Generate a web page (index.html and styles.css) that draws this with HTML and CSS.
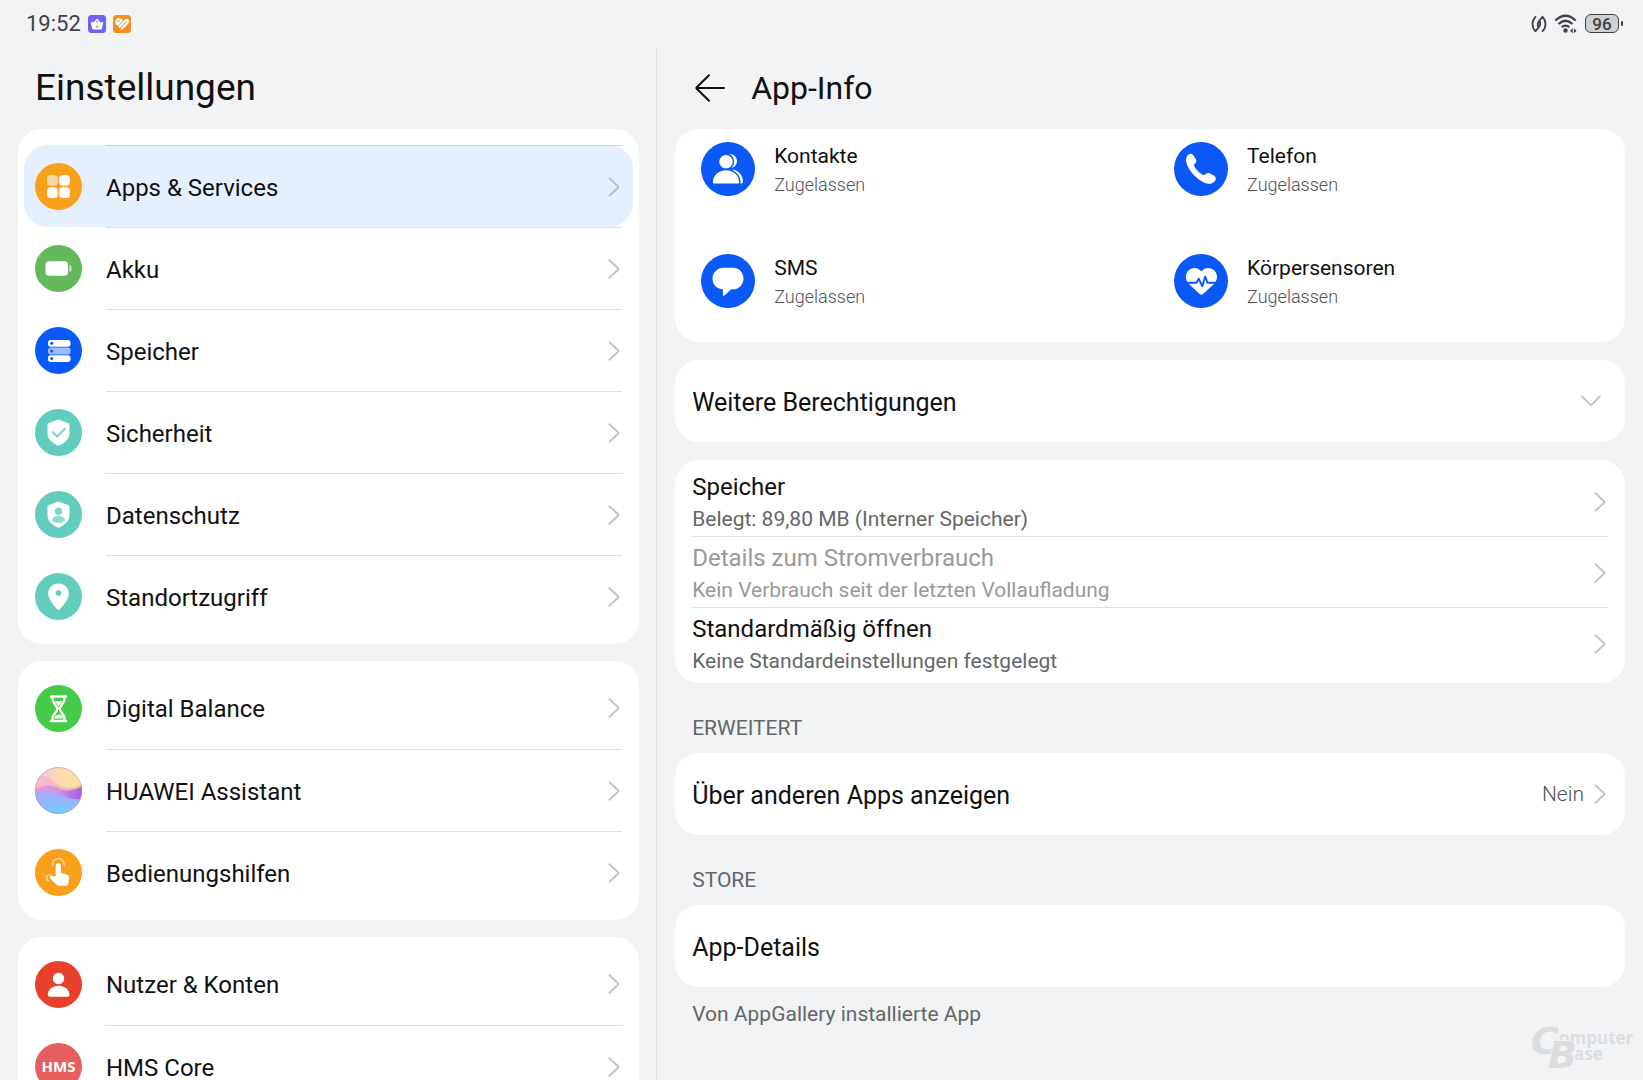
FILE: index.html
```html
<!DOCTYPE html>
<html lang="de">
<head>
<meta charset="utf-8">
<meta name="viewport" content="width=device-width, initial-scale=1">
<title>Einstellungen</title>
<link rel="stylesheet" href="styles.css">
</head>
<body>
<svg class="defs" aria-hidden="true">
  <symbol id="chevron" viewBox="0 0 12 20"><path d="M1.500 1.200 10 9.200q.9.8 0 1.600L1.500 18.800" fill="none" stroke="currentColor" stroke-width="2" stroke-linecap="round" stroke-linejoin="round"/></symbol>
  <symbol id="chevron-down" viewBox="0 0 20 12"><path d="M1.200 1.500 9.200 9.600q.8.800 1.600 0L18.800 1.500" fill="none" stroke="currentColor" stroke-width="2" stroke-linecap="round" stroke-linejoin="round"/></symbol>
</svg>

<header class="status">
  <div class="status-side">
    <time class="clock">19:52</time>
    <svg class="notice" viewBox="0 0 18 18" aria-hidden="true"><rect width="18" height="18" rx="3.500" fill="#6c63ee"/><path d="M3 7.200h2.500L9 3.600l3.500 3.600H15q.4.200.2.800l-1.400 5.700q-.2.800-1 .8H5.200q-.8 0-1-.8L2.800 8q-.2-.6.2-.8z" fill="#fff"/><path d="M7.500 7.200 9 5.600l1.500 1.600z" fill="#8d86f2"/><path d="M7.200 12.700 9 9.400l1.800 3.300z" fill="#f2a35e"/></svg>
    <svg class="notice" viewBox="0 0 18 18" aria-hidden="true"><rect width="18" height="18" rx="3.500" fill="#f78d1e"/><path d="M3.700 8.500C2.500 6 4 4 6 4.200q1.500 0 2.500 1.300L4.700 9.300M6.500 11.500l6-6q1.300-1.200 2.200-.2t-.2 2.500L8.800 13.700" fill="none" stroke="#fff" stroke-width="2.300" stroke-linecap="round" stroke-linejoin="round"/></svg>
  </div>
  <div class="status-side">
    <svg class="nfc" viewBox="0 0 16 18" aria-hidden="true"><path d="M4.500 1.800Q1.500 4.600 1.500 9t3 7.200M11.500 1.800q3 2.800 3 7.200t-3 7.200M4.500 16.200 8 12q2-2.500.8-6M11.500 1.800 8 6q-2 2.500-.8 6" fill="none" stroke="#3f4144" stroke-width="1.800" stroke-linecap="round"/></svg>
    <svg class="wifi" viewBox="0 0 24 20" aria-hidden="true"><path d="M1.300 6.500Q11.500-3 21.700 6.500M4.500 10Q11.500 3.500 18.500 10M7.700 13.200q3.800-3.200 7.600 0" fill="none" stroke="#3f4144" stroke-width="2.300"/><circle cx="11.500" cy="16.500" r="2.200" fill="#3f4144"/><path d="m18.700 14.200-2.700 2.500 2.700 2.500zm1.200 0 2.700 2.500-2.700 2.500z" fill="#3f4144"/></svg>
    <span class="battery">96</span>
  </div>
</header>

<div class="panes">
  <nav class="menu" aria-label="Einstellungen">
    <h1 class="menu-title">Einstellungen</h1>

    <ul class="card menu-card menu-card-cut">
      <li><a class="menu-row is-active" href="#apps" aria-current="page">
        <svg class="menu-icon" viewBox="0 0 47 47"><circle cx="23.500" cy="23.500" r="23.500" fill="#f8a01c"/><rect x="12" y="12" width="10.700" height="10.700" rx="3.500" fill="#fcd9a4"/><g fill="#fff"><rect x="24.200" y="12" width="10.700" height="10.700" rx="3.500"/><rect x="12" y="24.200" width="10.700" height="10.700" rx="3.500"/><rect x="24.200" y="24.200" width="10.700" height="10.700" rx="3.500"/></g></svg>
        <span class="menu-body"><span class="label">Apps &amp; Services</span><svg class="chevron"><use href="#chevron"/></svg></span></a></li>
      <li><a class="menu-row" href="#akku">
        <svg class="menu-icon" viewBox="0 0 47 47"><circle cx="23.500" cy="23.500" r="23.500" fill="#65b95c"/><rect x="10.500" y="16.300" width="22.500" height="14.500" rx="3.500" fill="#fff"/><path d="M34.200 20.500h1.300q1 0 1 1v4q0 1-1 1h-1.300z" fill="#c8e6c4"/></svg>
        <span class="menu-body"><span class="label">Akku</span><svg class="chevron"><use href="#chevron"/></svg></span></a></li>
      <li><a class="menu-row" href="#speicher">
        <svg class="menu-icon" viewBox="0 0 47 47"><circle cx="23.500" cy="23.500" r="23.500" fill="#0a59f7"/><rect x="13" y="13" width="22.500" height="6.700" rx="2.700" fill="#fff"/><rect x="13" y="20.500" width="22.500" height="7" rx="2.700" fill="#9dbdfc"/><rect x="13" y="28.200" width="22.500" height="6.700" rx="2.700" fill="#fff"/><g fill="#0a59f7"><circle cx="16.700" cy="16.300" r="1.500"/><circle cx="16.700" cy="24" r="1.500"/><circle cx="16.700" cy="31.500" r="1.500"/></g></svg>
        <span class="menu-body"><span class="label">Speicher</span><svg class="chevron"><use href="#chevron"/></svg></span></a></li>
      <li><a class="menu-row" href="#sicherheit">
        <svg class="menu-icon" viewBox="0 0 47 47"><circle cx="23.500" cy="23.500" r="23.500" fill="#62cdbc"/><path d="M23.500 10.500 33 14q1.500.6 1.500 2v8c0 6-4.500 10-11 12.800C17 34 12.500 30 12.500 24v-8q0-1.400 1.500-2z" fill="#fff"/><path d="m17.500 23 4.700 4.500 7.800-8" fill="none" stroke="#7ed6c8" stroke-width="2" stroke-linecap="round" stroke-linejoin="round"/></svg>
        <span class="menu-body"><span class="label">Sicherheit</span><svg class="chevron"><use href="#chevron"/></svg></span></a></li>
      <li><a class="menu-row" href="#datenschutz">
        <svg class="menu-icon" viewBox="0 0 47 47"><circle cx="23.500" cy="23.500" r="23.500" fill="#62cdbc"/><path d="M23.500 10.500 33 14q1.500.6 1.500 2v8c0 6-4.500 10-11 12.800C17 34 12.500 30 12.500 24v-8q0-1.400 1.500-2z" fill="#fff"/><circle cx="23.500" cy="20.300" r="3.700" fill="#7ed6c8"/><ellipse cx="23.500" cy="28.500" rx="6.500" ry="3.600" fill="#8fdccf"/></svg>
        <span class="menu-body"><span class="label">Datenschutz</span><svg class="chevron"><use href="#chevron"/></svg></span></a></li>
      <li><a class="menu-row" href="#standort">
        <svg class="menu-icon" viewBox="0 0 47 47"><circle cx="23.500" cy="23.500" r="23.500" fill="#62cdbc"/><path d="M23.500 10.500c6 0 10.300 4.500 10.300 10 0 6-5.300 11.700-9 15.700q-1.300 1.200-2.600 0c-3.700-4-9-9.700-9-15.700 0-5.500 4.300-10 10.300-10z" fill="#fff"/><circle cx="23.500" cy="20" r="2.800" fill="#62cdbc"/></svg>
        <span class="menu-body"><span class="label">Standortzugriff</span><svg class="chevron"><use href="#chevron"/></svg></span></a></li>
    </ul>

    <ul class="card menu-card">
      <li><a class="menu-row" href="#balance">
        <svg class="menu-icon" viewBox="0 0 47 47"><circle cx="23.500" cy="23.500" r="23.500" fill="#44cb49"/><path d="M16 11.500h15M16 36h15M17.500 11.500v2.500c0 4 4.800 6.500 4.800 9.700s-4.800 5.500-4.800 9.500V36M29.500 11.500v2.500c0 4-4.800 6.500-4.800 9.700s4.800 5.500 4.800 9.500V36" fill="none" stroke="#fff" stroke-width="2.400" stroke-linecap="round"/><path d="M20 15.500q3.500 1.500 7 0-.8 3-3.500 5.500-2.700-2.500-3.500-5.500zM19.300 33.500q.7-3.500 4.200-4t4.200 4z" fill="#fff"/></svg>
        <span class="menu-body"><span class="label">Digital Balance</span><svg class="chevron"><use href="#chevron"/></svg></span></a></li>
      <li><a class="menu-row" href="#assistant">
        <svg class="menu-icon" viewBox="0 0 47 47"><defs><clipPath id="orb"><circle cx="23.500" cy="23.500" r="23.500"/></clipPath><linearGradient id="sky"><stop offset="0" stop-color="#f6c4dc"/><stop offset=".5" stop-color="#fad9b4"/><stop offset="1" stop-color="#fbe29a"/></linearGradient><linearGradient id="dune"><stop offset="0" stop-color="#f7bcd6"/><stop offset=".6" stop-color="#f7b4b8"/><stop offset="1" stop-color="#f8b08c"/></linearGradient><linearGradient id="band"><stop offset="0" stop-color="#e89ad4"/><stop offset=".5" stop-color="#cf93ec"/><stop offset="1" stop-color="#a558e4"/></linearGradient><linearGradient id="sea" x2="0" y2="1"><stop offset="0" stop-color="#a9a8fb"/><stop offset="1" stop-color="#72ccff"/></linearGradient></defs><g clip-path="url(#orb)"><path d="M0 0h47v47H0z" fill="url(#sky)"/><path d="M0 9q12-2 18 5t15 7 14-4v20H0z" fill="url(#dune)"/><path d="M0 22q12-6 20-2t14 3.500T47 20v20H0z" fill="url(#band)"/><path d="M0 25q12-2 20 1t14 5 13 1v15H0z" fill="url(#sea)"/></g><circle cx="23.500" cy="23.500" r="23" fill="none" stroke="#a795b8" stroke-opacity=".5"/></svg>
        <span class="menu-body"><span class="label">HUAWEI Assistant</span><svg class="chevron"><use href="#chevron"/></svg></span></a></li>
      <li><a class="menu-row" href="#bedienungshilfen">
        <svg class="menu-icon" viewBox="0 0 47 47"><circle cx="23.500" cy="23.500" r="23.500" fill="#f8a01c"/><path d="M20.700 17q0-2.700 2.600-2.700t2.600 2.700v7l6 1.500q2.400.8 2.200 3l-.8 6q-.3 2.200-2.500 2.200h-6.500q-1.800 0-3-1.200l-6-6q-1.300-1.500-.2-2.400 1.500-1 5.600.5z" fill="#fff"/><path d="M17.600 16.500a5.800 5.800 0 1 1 11.400 0M15 25.500q-3.500 1-3.500 3 0 2 2 3.500" fill="none" stroke="#fcd9a4" stroke-width="1.300" stroke-linecap="round"/></svg>
        <span class="menu-body"><span class="label">Bedienungshilfen</span><svg class="chevron"><use href="#chevron"/></svg></span></a></li>
    </ul>

    <ul class="card menu-card">
      <li><a class="menu-row" href="#konten">
        <svg class="menu-icon" viewBox="0 0 47 47"><circle cx="23.500" cy="23.500" r="23.500" fill="#e8402a"/><circle cx="23.500" cy="17.500" r="5.700" fill="#fff"/><path d="M14.500 35.800q-1.700 0-1.700-1.700c0-5.500 4.700-9.300 10.700-9.300s11 3.800 11 9.300q0 1.700-1.700 1.700z" fill="#fff"/></svg>
        <span class="menu-body"><span class="label">Nutzer &amp; Konten</span><svg class="chevron"><use href="#chevron"/></svg></span></a></li>
      <li><a class="menu-row" href="#hms">
        <svg class="menu-icon" viewBox="0 0 47 47"><circle cx="23.500" cy="23.500" r="23.500" fill="#e55f5f"/><text class="hms" x="23.500" y="29" text-anchor="middle">HMS</text></svg>
        <span class="menu-body"><span class="label">HMS Core</span><svg class="chevron"><use href="#chevron"/></svg></span></a></li>
    </ul>
  </nav>

  <main class="detail">
    <div class="detail-head">
      <button class="back" type="button" aria-label="Zurück"><svg viewBox="0 0 30 28"><path d="M29 14H1.500M14 1.200 1.800 13.200q-.8.800 0 1.600L14 26.800" fill="none" stroke="#111" stroke-width="2" stroke-linecap="round" stroke-linejoin="round"/></svg></button>
      <h2 class="detail-title">App-Info</h2>
    </div>

    <ul class="card permissions">
      <li class="permission">
        <svg class="permission-icon" viewBox="0 0 54 54"><circle cx="27" cy="27" r="27" fill="#0a59f7"/><g fill="#fff"><circle cx="29" cy="19" r="7"/><path d="M20 41.500h20q2 0 2-2c0-6-4.500-11-10-12z"/></g><g fill="#fff" stroke="#0a59f7" stroke-width="1.500"><circle cx="25" cy="19.700" r="7.500"/><path d="M13 42.200q-1.800 0-1.800-2c0-7 6-12.700 13.800-12.700s13.800 5.700 13.800 12.700q0 2-1.800 2z"/></g></svg>
        <div><div class="permission-name">Kontakte</div><div class="permission-state">Zugelassen</div></div></li>
      <li class="permission">
        <svg class="permission-icon" viewBox="0 0 54 54"><circle cx="27" cy="27" r="27" fill="#0a59f7"/><path d="M13.500 13.500c2-2.500 4.500-2 6 0l2.200 3.400c1.200 2 .8 3.400-.7 4.600q-1.500 1.200-.6 3c1.600 3 4.600 6.300 8.200 8.300q1.700.8 3-.5c1.500-1.500 3-1.700 5-.6l3.500 2c2.200 1.400 2.300 3.600.6 5.500-2 2.400-5.500 3.400-9.700 1.800C22 37 14.500 28.500 12.300 20.500q-1-4.500 1.200-7z" fill="#fff"/></svg>
        <div><div class="permission-name">Telefon</div><div class="permission-state">Zugelassen</div></div></li>
      <li class="permission">
        <svg class="permission-icon" viewBox="0 0 54 54"><circle cx="27" cy="27" r="27" fill="#0a59f7"/><path d="M22.500 13.700h9.500c6 0 10.500 4.700 10.500 10.700S38 35.300 32.500 35.300l-2.500.3-6.500 6q-1.700 1.300-1.600-.8v-5.500C15.500 35 11.500 30.500 11.500 24.500s5-10.800 11-10.800z" fill="#fff"/></svg>
        <div><div class="permission-name">SMS</div><div class="permission-state">Zugelassen</div></div></li>
      <li class="permission">
        <svg class="permission-icon" viewBox="0 0 54 54"><circle cx="27" cy="27" r="27" fill="#0a59f7"/><path d="M27.300 17.500c3.500-4.500 9.500-4.500 13-1 3.800 4 3.500 9.500-.3 13.500L29 40q-1.700 1.400-3.400 0L15 30c-4-4-4.300-9.500-.5-13.500 3.500-3.500 9.300-3.500 12.800 1z" fill="#fff"/><path d="M11 28.700h11.700l2-4 3.500 7.500 3-9.500 2.300 6H44" fill="none" stroke="#0a59f7" stroke-width="1.900" stroke-linejoin="round"/></svg>
        <div><div class="permission-name">Körpersensoren</div><div class="permission-state">Zugelassen</div></div></li>
    </ul>

    <section class="card">
      <button class="row" type="button" aria-expanded="false"><span class="label">Weitere Berechtigungen</span><svg class="chevron-down"><use href="#chevron-down"/></svg></button>
    </section>

    <ul class="card info-card">
      <li><a class="info-row" href="#app-speicher"><span><span class="info-name">Speicher</span><span class="info-note">Belegt: 89,80 MB (Interner Speicher)</span></span><svg class="chevron"><use href="#chevron"/></svg></a></li>
      <li><a class="info-row is-disabled" aria-disabled="true" href="#strom"><span><span class="info-name">Details zum Stromverbrauch</span><span class="info-note">Kein Verbrauch seit der letzten Vollaufladung</span></span><svg class="chevron"><use href="#chevron"/></svg></a></li>
      <li><a class="info-row" href="#standard"><span><span class="info-name">Standardmäßig öffnen</span><span class="info-note">Keine Standardeinstellungen festgelegt</span></span><svg class="chevron"><use href="#chevron"/></svg></a></li>
    </ul>

    <h3 class="group">ERWEITERT</h3>
    <section class="card">
      <a class="row" href="#overlay"><span class="label">Über anderen Apps anzeigen</span><span class="value">Nein <svg class="chevron"><use href="#chevron"/></svg></span></a>
    </section>

    <h3 class="group">STORE</h3>
    <section class="card">
      <a class="row" href="#details"><span class="label">App-Details</span></a>
    </section>
    <p class="footnote">Von AppGallery installierte App</p>
  </main>
</div>

<svg class="watermark" viewBox="0 0 110 50" role="img" aria-label="ComputerBase">
  <text class="mark-small" x="28" y="22">omputer</text>
  <text class="mark-small" x="43" y="38">ase</text>
  <text class="mark-big" x="0" y="32">C</text>
  <text class="mark-big mark-front" x="17" y="46">B</text>
</svg>
</body>
</html>
```
FILE: styles.css
```css
* { box-sizing: border-box; }

body {
  margin: 0;
  height: 100vh;
  overflow: hidden;
  display: flex;
  flex-direction: column;
  background: #f1f3f5;
  color: #111;
  font-family: Roboto, "Noto Sans", sans-serif;
  font-size: 24px;
}

h1, h2, h3, p, ul { margin: 0; padding: 0; font-weight: 400; }
ul { list-style: none; }
a { color: inherit; text-decoration: none; }
button { border: 0; padding: 0; background: none; color: inherit; font: inherit; text-align: left; cursor: pointer; }
svg { display: block; flex: none; }
.defs { position: absolute; width: 0; height: 0; }

/* Status bar */
.status {
  flex: none;
  height: 47px;
  padding: 0 24px 0 26px;
  display: flex;
  justify-content: space-between;
  align-items: center;
}
.status-side { display: flex; align-items: center; gap: 7px; }
.clock { font-size: 22px; color: #3f4144; }
.notice { width: 18px; height: 18px; }
.nfc { width: 16px; height: 18px; }
.wifi { width: 24px; height: 20px; }
.battery {
  position: relative;
  width: 34px;
  height: 19px;
  border: 1px solid #3f4144;
  border-radius: 6px;
  background: #cfd1d3;
  color: #3f4144;
  font-size: 17px;
  font-weight: 500;
  line-height: 18px;
  text-align: center;
}
.battery::after {
  content: "";
  position: absolute;
  right: -5px;
  top: 6px;
  width: 2px;
  height: 5px;
  border-radius: 1px;
  background: #3f4144;
}

/* Two-pane layout */
.panes { flex: 1; min-height: 0; display: flex; }
.card { flex: none; border-radius: 24px; background: #fff; }
.chevron { width: 12px; height: 20px; color: #c3c5c7; }
.chevron-down { width: 20px; height: 12px; margin-right: 7px; color: #c3c5c7; }
.label { padding-top: 2px; }

.menu {
  width: 40%;
  padding: 0 17px 0 18px;
  border-right: 1px solid #e2e4e6;
  overflow: hidden;
  display: flex;
  flex-direction: column;
  gap: 17px;
}
.menu-title {
  height: 65px;
  padding-left: 17px;
  font-size: 37px;
  line-height: 82px;
}
.menu-card { padding: 6px 6px 7px; }
.menu-card-cut { padding-top: 16px; }
.menu-row {
  height: 82px;
  padding: 0 11px;
  border-radius: 24px;
  display: flex;
  align-items: center;
  gap: 24px;
}
.menu-icon { width: 47px; height: 47px; }
.menu-body {
  flex: 1;
  height: 100%;
  padding-right: 2px;
  display: flex;
  align-items: center;
  justify-content: space-between;
}
li + li .menu-body,
.is-active .menu-body { border-top: 1px solid #dfe0e1; }
.is-active { background: #e4f0fe; }
.is-active .menu-body { border-color: #c6d2de; }
.is-active .chevron { color: #b3bfcb; }
.hms { fill: #fff; font: 700 15px "Open Sans", sans-serif; }

.detail {
  flex: 1;
  min-width: 0;
  padding: 0 18px;
  overflow: hidden;
}
.detail-head {
  height: 82px;
  padding-left: 20px;
  display: flex;
  align-items: center;
  gap: 26px;
}
.back svg { width: 30px; height: 28px; }
.detail-title { font-size: 32px; line-height: 40px; }

.permissions {
  height: 213px;
  padding: 13px 2px 0;
  display: grid;
  grid-template-columns: 1fr 1fr;
  grid-auto-rows: 112px;
}
.permission { padding-left: 24px; display: flex; align-items: flex-start; gap: 19px; }
.permission-icon { width: 54px; height: 54px; }
.permission-name { font-size: 21px; line-height: 29px; }
.permission-state { font-size: 18px; font-weight: 300; line-height: 28px; color: #505254; }

.card + .card { margin-top: 18px; }
.menu .card + .card { margin-top: 0; }
.row {
  width: 100%;
  height: 82px;
  padding: 0 17px;
  font-size: 25px;
  display: flex;
  align-items: center;
  justify-content: space-between;
}
.value { display: flex; align-items: center; gap: 10px; font-size: 21px; font-weight: 300; color: #505254; }
.row .chevron, .info-row .chevron { margin-right: 2px; }

.info-card { padding: 6px 17px 5px; }
.info-row {
  padding: 4px 0 2px;
  display: flex;
  align-items: center;
  justify-content: space-between;
}
.info-card li + li { border-top: 1px solid #dfe0e1; }
.info-name { display: block; line-height: 34px; }
.info-note { display: block; font-size: 21px; line-height: 30px; color: #646668; }
.is-disabled .info-name, .is-disabled .info-note { color: #999; }

.group { padding: 30px 17px 10px; font-size: 21px; line-height: 30px; color: #646668; }
.footnote { padding: 12px 17px; font-size: 21px; line-height: 30px; color: #646668; }

/* Watermark over the page corner */
.watermark { position: absolute; right: 2px; bottom: 8px; width: 110px; height: 50px; overflow: visible; }
.mark-small { fill: #dadcde; font: 700 17px "Open Sans", sans-serif; }
.mark-big { fill: #dadcde; font: italic 700 38px "DejaVu Sans", sans-serif; }
.mark-front { stroke: #f1f3f5; stroke-width: 2px; paint-order: stroke; }
```
